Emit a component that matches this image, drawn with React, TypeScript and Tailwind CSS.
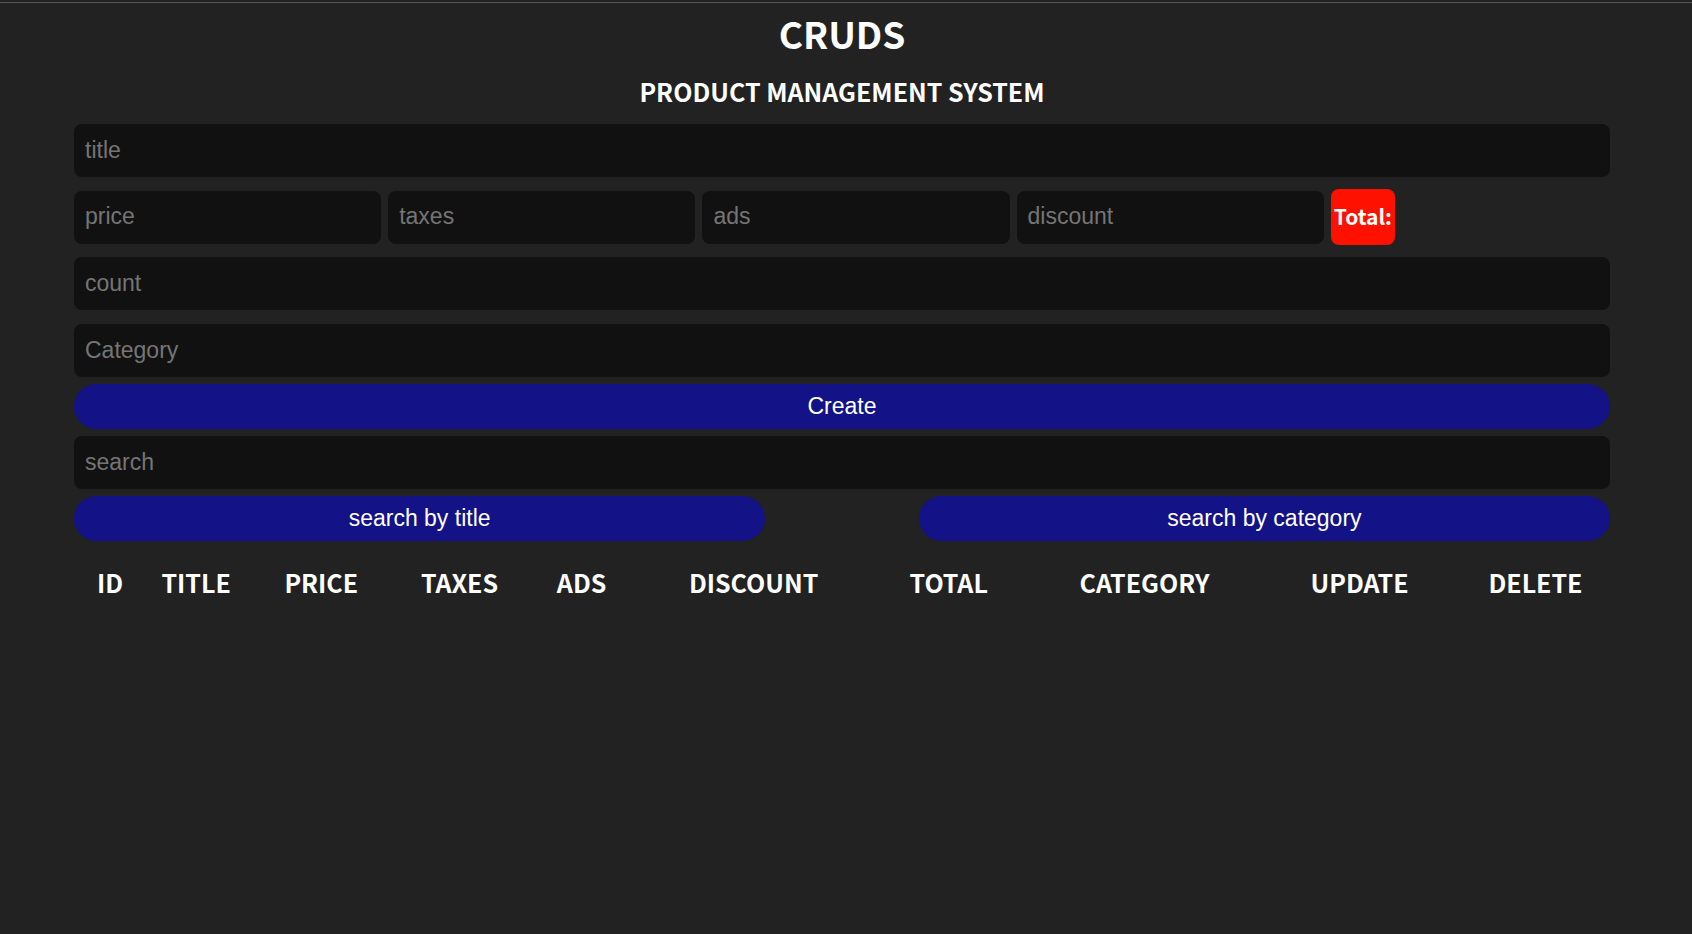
const inputClass =
  'block w-full h-[53px] rounded-lg bg-[#111] px-[11px] pb-px text-[23px] leading-7 text-white placeholder:text-[#757575] focus:outline-none';
const buttonClass =
  'h-[45px] rounded-full bg-[#131287] pb-[2px] text-[23px] leading-7 text-white hover:bg-[#0b0b60] cursor-pointer';
const headingFont = "font-['Noto_Sans_CJK_SC',sans-serif] font-bold";

const amounts = ['price', 'taxes', 'ads', 'discount'];

const columns = [
  { name: 'ID', width: 'w-[4.7%]' },
  { name: 'TITLE', width: 'w-[6.5%]' },
  { name: 'PRICE', width: 'w-[9.8%]' },
  { name: 'TAXES', width: 'w-[8.2%]' },
  { name: 'ADS', width: 'w-[7.7%]' },
  { name: 'DISCOUNT', width: 'w-[14.7%]' },
  { name: 'TOTAL', width: 'w-[10.7%]' },
  { name: 'CATEGORY', width: 'w-[14.8%]' },
  { name: 'UPDATE', width: 'w-[13.2%]' },
  { name: 'DELETE', width: 'w-[9.7%]' },
];

export default function App() {
  return (
    <div className="min-h-screen bg-[#222] pt-[2px] font-['Liberation_Sans',Arial,sans-serif] text-white">
      <main className="border-t border-[#555] pr-[82px] pl-[74px]">
        <header className={`text-center ${headingFont}`}>
          <h1 className="pt-[6px] text-[37px] leading-12">CRUDS</h1>
          <h2 className="pt-[18px] pb-[17px] text-[25px] leading-8">PRODUCT MANAGEMENT SYSTEM</h2>
        </header>

        <form onSubmit={(e) => e.preventDefault()}>
          <input className={inputClass} type="text" placeholder="title" aria-label="title" />
          <div className="my-3 flex items-center gap-[7px]">
            {amounts.map((name) => (
              <div key={name} className="w-1/5">
                <input className={inputClass} type="number" placeholder={name} aria-label={name} />
              </div>
            ))}
            <output
              className={`flex h-14 items-center rounded-lg bg-[#ff1100] px-[3px] pb-[2px] text-[21px] leading-7 ${headingFont}`}
            >
              Total:
            </output>
          </div>
          <input className={inputClass} type="number" placeholder="count" aria-label="count" />
          <div className="mt-[14px] mb-[7px]">
            <input className={inputClass} type="text" placeholder="Category" aria-label="Category" />
          </div>
          <button className={`w-full ${buttonClass}`} type="submit">
            Create
          </button>
        </form>

        <section className="mt-[7px]">
          <input className={inputClass} type="search" placeholder="search" aria-label="search" />
          <div className="mt-[7px] flex justify-between">
            <button className={`w-[45%] ${buttonClass}`} type="button">
              search by title
            </button>
            <button className={`w-[45%] ${buttonClass}`} type="button">
              search by category
            </button>
          </div>
        </section>

        <table className={`mt-[23px] w-full table-fixed text-center text-[25px] leading-9 ${headingFont}`}>
          <thead>
            <tr>
              {columns.map(({ name, width }) => (
                <th key={name} scope="col" className={width}>
                  {name}
                </th>
              ))}
            </tr>
          </thead>
          <tbody />
        </table>
      </main>
    </div>
  );
}
